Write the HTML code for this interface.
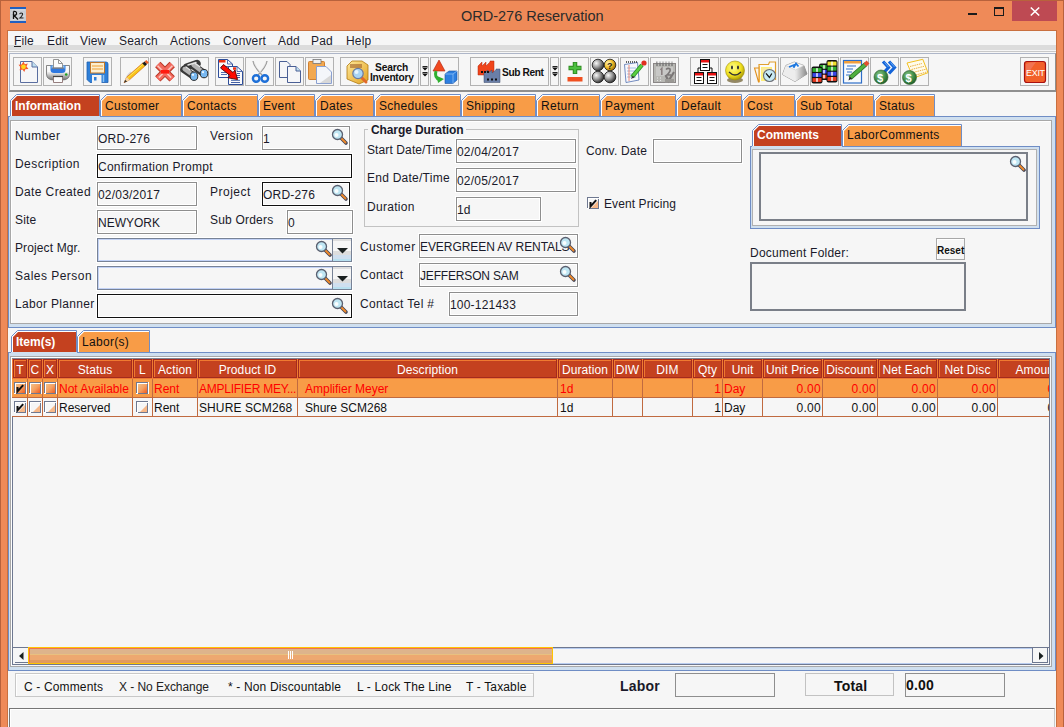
<!DOCTYPE html>
<html><head><meta charset="utf-8"><style>
*{box-sizing:border-box;margin:0;padding:0}
html,body{width:1064px;height:727px;overflow:hidden}
body{position:relative;background:#EF8A58;font-family:"Liberation Sans",sans-serif;font-size:12px;color:#1a1a2a}
.a{position:absolute}
.t{position:absolute;white-space:nowrap;line-height:14px}
svg{position:absolute;overflow:visible}
</style></head><body>
<div class="a" style="left:0px;top:0px;width:1064px;height:727px;border:1px solid #B8623C;border-bottom:none"></div>
<svg style="left:10px;top:7px" width="16" height="16"><rect x="0" y="0" width="16" height="16" fill="#C8CCD2"/><rect x="0" y="0" width="16" height="2" fill="#1F5FC0"/><rect x="0" y="14" width="16" height="2" fill="#1F5FC0"/><path d="M2 3 H15 M1 6 H14 M2 9 H15 M1 12 H14" stroke="#E0E2E6" stroke-width="0.8"/><path d="M3.5 4.5 V12 M3.5 4.5 Q7 4 6.5 7 Q6 8.5 4 8.5 L8 12.5" stroke="#111" stroke-width="1.3" fill="none"/><path d="M9.5 7 Q11 5.3 12.5 6.5 Q13 8 10 11 H13.5" stroke="#222" stroke-width="1.1" fill="none"/></svg>
<div class="t" style="left:461px;top:7px;font-size:14.5px;color:#2b2b2b;letter-spacing:0px;line-height:18px;">ORD-276 Reservation</div>
<div class="a" style="left:968px;top:13px;width:9px;height:2px;background:#1b1b1b"></div>
<div class="a" style="left:994px;top:7px;width:10px;height:9px;border:1px solid #1b1b1b;border-top-width:2px"></div>
<div class="a" style="left:1012px;top:1px;width:45px;height:20px;background:#BE4A53"></div>
<svg style="left:1030px;top:7px" width="10" height="9"><path d="M0.8 0.5 L9.2 8.5 M9.2 0.5 L0.8 8.5" stroke="#fff" stroke-width="1.6"/></svg>
<div class="a" style="left:7px;top:30px;width:1050px;height:697px;background:#C9703F"></div>
<div class="a" style="left:8px;top:31px;width:1048px;height:696px;background:#F6F6F6"></div>
<div class="a" style="left:8px;top:45px;width:1048px;height:5px;background:#DCDCDC"></div>
<div class="t" style="left:14px;top:34px;font-size:12px;color:#1c1c2c;letter-spacing:0.15px;">File</div>
<div class="t" style="left:47px;top:34px;font-size:12px;color:#1c1c2c;letter-spacing:0.15px;">Edit</div>
<div class="t" style="left:80px;top:34px;font-size:12px;color:#1c1c2c;letter-spacing:0.15px;">View</div>
<div class="t" style="left:119px;top:34px;font-size:12px;color:#1c1c2c;letter-spacing:0.15px;">Search</div>
<div class="t" style="left:170px;top:34px;font-size:12px;color:#1c1c2c;letter-spacing:0.15px;">Actions</div>
<div class="t" style="left:223px;top:34px;font-size:12px;color:#1c1c2c;letter-spacing:0.15px;">Convert</div>
<div class="t" style="left:278px;top:34px;font-size:12px;color:#1c1c2c;letter-spacing:0.15px;">Add</div>
<div class="t" style="left:311px;top:34px;font-size:12px;color:#1c1c2c;letter-spacing:0.15px;">Pad</div>
<div class="t" style="left:346px;top:34px;font-size:12px;color:#1c1c2c;letter-spacing:0.15px;">Help</div>
<div class="a" style="left:14px;top:46px;width:7px;height:1px;background:#222"></div>
<div class="a" style="left:8px;top:51px;width:1048px;height:1px;background:#C8C8C8"></div>
<div class="a" style="left:9px;top:53px;width:1047px;height:39px;border-top:1px solid #AEB6C8;border-left:1px solid #AEB6C8;border-right:1px solid #8F8F8F;border-bottom:2px solid #8F8F8F;background:#F6F6F6"></div>
<div class="a" style="left:13px;top:57px;width:29px;height:29px;border:1px solid #B2B2B2;background:#F6F6F6"></div>
<div class="a" style="left:43px;top:57px;width:29px;height:29px;border:1px solid #B2B2B2;background:#F6F6F6"></div>
<div class="a" style="left:83px;top:57px;width:29px;height:29px;border:1px solid #B2B2B2;background:#F6F6F6"></div>
<div class="a" style="left:120px;top:57px;width:29px;height:29px;border:1px solid #B2B2B2;background:#F6F6F6"></div>
<div class="a" style="left:150px;top:57px;width:29px;height:29px;border:1px solid #B2B2B2;background:#F6F6F6"></div>
<div class="a" style="left:180px;top:57px;width:29px;height:29px;border:1px solid #B2B2B2;background:#F6F6F6"></div>
<div class="a" style="left:215px;top:57px;width:29px;height:29px;border:1px solid #B2B2B2;background:#F6F6F6"></div>
<div class="a" style="left:245px;top:57px;width:29px;height:29px;border:1px solid #B2B2B2;background:#F6F6F6"></div>
<div class="a" style="left:275px;top:57px;width:29px;height:29px;border:1px solid #B2B2B2;background:#F6F6F6"></div>
<div class="a" style="left:305px;top:57px;width:29px;height:29px;border:1px solid #B2B2B2;background:#F6F6F6"></div>
<div class="a" style="left:340px;top:57px;width:79px;height:29px;border:1px solid #B2B2B2;background:#F6F6F6"></div>
<div class="a" style="left:420px;top:57px;width:9px;height:29px;border:1px solid #B2B2B2;background:#F6F6F6"></div>
<div class="a" style="left:430px;top:57px;width:29px;height:29px;border:1px solid #B2B2B2;background:#F6F6F6"></div>
<div class="a" style="left:470px;top:57px;width:79px;height:29px;border:1px solid #B2B2B2;background:#F6F6F6"></div>
<div class="a" style="left:550px;top:57px;width:9px;height:29px;border:1px solid #B2B2B2;background:#F6F6F6"></div>
<div class="a" style="left:560px;top:57px;width:29px;height:29px;border:1px solid #B2B2B2;background:#F6F6F6"></div>
<div class="a" style="left:590px;top:57px;width:29px;height:29px;border:1px solid #B2B2B2;background:#F6F6F6"></div>
<div class="a" style="left:620px;top:57px;width:29px;height:29px;border:1px solid #B2B2B2;background:#F6F6F6"></div>
<div class="a" style="left:650px;top:57px;width:29px;height:29px;border:1px solid #B2B2B2;background:#F6F6F6"></div>
<div class="a" style="left:690px;top:57px;width:29px;height:29px;border:1px solid #B2B2B2;background:#F6F6F6"></div>
<div class="a" style="left:720px;top:57px;width:29px;height:29px;border:1px solid #B2B2B2;background:#F6F6F6"></div>
<div class="a" style="left:750px;top:57px;width:29px;height:29px;border:1px solid #B2B2B2;background:#F6F6F6"></div>
<div class="a" style="left:780px;top:57px;width:29px;height:29px;border:1px solid #B2B2B2;background:#F6F6F6"></div>
<div class="a" style="left:810px;top:57px;width:29px;height:29px;border:1px solid #B2B2B2;background:#F6F6F6"></div>
<div class="a" style="left:840px;top:57px;width:29px;height:29px;border:1px solid #B2B2B2;background:#F6F6F6"></div>
<div class="a" style="left:870px;top:57px;width:29px;height:29px;border:1px solid #B2B2B2;background:#F6F6F6"></div>
<div class="a" style="left:900px;top:57px;width:29px;height:29px;border:1px solid #B2B2B2;background:#F6F6F6"></div>
<div class="a" style="left:1020px;top:57px;width:29px;height:29px;border:1px solid #B2B2B2;background:#F6F6F6"></div>
<svg style="left:0;top:0" width="1064" height="95">
<defs>
<linearGradient id="og" x1="0" y1="0" x2="1" y2="1"><stop offset="0" stop-color="#F2C890"/><stop offset="0.55" stop-color="#F5A060"/><stop offset="1" stop-color="#F05A20"/></linearGradient>
<radialGradient id="gball" cx="0.35" cy="0.35" r="0.7"><stop offset="0" stop-color="#fafafa"/><stop offset="0.5" stop-color="#9a9a9a"/><stop offset="1" stop-color="#2a2a2a"/></radialGradient>
<radialGradient id="yball" cx="0.35" cy="0.35" r="0.7"><stop offset="0" stop-color="#fff8c0"/><stop offset="0.5" stop-color="#F5C330"/><stop offset="1" stop-color="#9a6a00"/></radialGradient>
<radialGradient id="smile" cx="0.4" cy="0.35" r="0.7"><stop offset="0" stop-color="#FFFF90"/><stop offset="0.6" stop-color="#F0E020"/><stop offset="1" stop-color="#A09000"/></radialGradient>
<radialGradient id="coin" cx="0.4" cy="0.35" r="0.7"><stop offset="0" stop-color="#8FCB8F"/><stop offset="0.6" stop-color="#3E8A45"/><stop offset="1" stop-color="#1E5A25"/></radialGradient>
<linearGradient id="prn" x1="0" y1="0" x2="0" y2="1"><stop offset="0" stop-color="#fafafa"/><stop offset="0.5" stop-color="#e8e8e8"/><stop offset="1" stop-color="#707070"/></linearGradient>
<linearGradient id="key" x1="0" y1="0" x2="1" y2="0"><stop offset="0" stop-color="#f0f0f0"/><stop offset="1" stop-color="#8a8a8a"/></linearGradient>
<linearGradient id="fold" x1="0" y1="0" x2="1" y2="1"><stop offset="0" stop-color="#FFE89A"/><stop offset="1" stop-color="#E2A21F"/></linearGradient>
</defs>
<path d="M20.5 61.5 H32 L37.5 67 V82.5 H20.5 Z" fill="#f6f6f8" stroke="#5a6ea0" stroke-width="1"/>
<path d="M32 61.5 V67 H37.5" fill="#BFE0F0" stroke="#5a6ea0" stroke-width="1"/>
<path d="M23.5 61.5 L24.8 64.3 L27.8 63.6 L26.5 66.5 L28.5 69 L25.3 69.2 L24.3 72 L22.5 69.6 L19.5 70.2 L20.6 67.2 L18.5 64.8 L21.6 64.6 Z" fill="#F5582A"/>
<circle cx="23.5" cy="66.8" r="2.4" fill="#FFD41A"/>
<path d="M46.5 65.5 H69.5 V74 Q69.5 80 62 80 H54 Q46.5 80 46.5 74 Z" fill="url(#prn)" stroke="#6a6a6a" stroke-width="0.8"/>
<path d="M47.3 66 H68.7 V72 H47.3 Z" fill="#FAFAFA"/>
<path d="M50.5 65.5 H65.5 V70 Q65.5 73 62 73 H54 Q50.5 73 50.5 70 Z" fill="#2E78E0"/>
<path d="M51.5 65.5 H64.5 V68.5 H51.5 Z" fill="#8CC4F4"/>
<path d="M53.5 59.5 H58.5 L62.5 63.5 V68 H53.5 Z" fill="#FCFCFC" stroke="#8a8a8a" stroke-width="0.9"/>
<path d="M58.5 59.5 V63.5 H62.5" fill="none" stroke="#8a8a8a" stroke-width="0.9"/>
<path d="M52 68.2 H64" stroke="#707888" stroke-width="1.2"/>
<circle cx="66.2" cy="74.5" r="1.3" fill="#20A020"/>
<path d="M53.5 76.5 H62.5 V82.5 H53.5 Z" fill="#FCFCFC" stroke="#8a7070" stroke-width="0.9"/>
<path d="M53 76.5 H63" stroke="#444" stroke-width="1.2"/>
<path d="M87 62 H106 Q108 62 108 64 V82.5 H90 L87 79.5 Z" fill="#2E7FD8" stroke="#1f5fb0" stroke-width="0.8"/>
<rect x="90.5" y="62.5" width="14" height="10.5" fill="#FCEFD0" stroke="#C0782A" stroke-width="1"/>
<path d="M92 66 H103 M92 69 H103" stroke="#F0A030" stroke-width="1.2"/>
<rect x="92" y="75" width="9.5" height="8" fill="#f4f4f4"/><rect x="94" y="77" width="2.5" height="3.5" fill="#2E7FD8"/>
<path d="M103.5 75 V82" stroke="#8EC3F2" stroke-width="1.5"/>
<path d="M124.5 82 Q125 76 130.5 71.5 L132 73 Z" fill="#d0d0d0" opacity="0.9"/>
<path d="M124 82.8 L126.8 77 L143 62.8 L145.6 65.4 L129.5 79.8 Z" fill="#F8C418" stroke="#D06010" stroke-width="0.6"/>
<path d="M127.8 77.6 L143.8 63.6" stroke="#FFE870" stroke-width="0.8"/>
<path d="M124 82.8 L125.2 79.8 L127.2 81.6 Z" fill="#333"/>
<path d="M125.2 79.8 L126.8 77 L129.5 79.8 L127.2 81.6 Z" fill="#F4D4A8"/>
<path d="M142.3 63.4 L144.6 61.4 L147.2 64 L145 66 Z" fill="#1a1a1a"/>
<path d="M144.6 61.4 L146.3 60 L148.8 62.5 L147.2 64 Z" fill="#F06028"/>
<path d="M157.8 64.5 L172.2 78.9 M172.2 64.5 L157.8 78.9" stroke="#B83828" stroke-width="7.6" stroke-linecap="butt"/>
<path d="M157.8 64.5 L172.2 78.9 M172.2 64.5 L157.8 78.9" stroke="#F36A5E" stroke-width="5.6" stroke-linecap="butt"/>
<path d="M157.6 65.8 L162.6 70.8 M172.4 65.8 L167.4 70.8 M158.8 77.6 L162.6 73.8 M171.2 77.6 L167.4 73.8" stroke="#FBC8C0" stroke-width="1.5" stroke-linecap="butt"/>
<path d="M161 71.7 H169" stroke="#FF1A10" stroke-width="3.6"/>
<path d="M184 69.5 L193.5 76 M193 65.5 L204 73.5 M187 67 L197 63.5" stroke="#3a3a3a" stroke-width="7.5" stroke-linecap="round"/>
<path d="M184.5 69 L192.5 74.8 M193.5 65 L202.5 71.8" stroke="#B4B4B4" stroke-width="4.2" stroke-linecap="round"/>
<path d="M186 67 L190 70 M188 65 L196 62.5 M195.5 63.6 L199.5 66.5" stroke="#E6E6E6" stroke-width="1.4" stroke-linecap="round"/>
<ellipse cx="194" cy="76.2" rx="3.8" ry="4.2" fill="#78B8F0" stroke="#2a2a2a" stroke-width="1"/>
<ellipse cx="204" cy="73.6" rx="3.8" ry="4.2" fill="#78B8F0" stroke="#2a2a2a" stroke-width="1"/>
<circle cx="193" cy="74.8" r="1.1" fill="#F0F8FF"/><circle cx="203" cy="72.2" r="1.1" fill="#F0F8FF"/>
<path d="M218.5 59.5 H227.5 L232.5 64 V77.5 H218.5 Z" fill="#FAFAFC" stroke="#2E4E9A" stroke-width="1"/>
<path d="M227.5 59.5 V64 H232.5" fill="none" stroke="#2E4E9A" stroke-width="0.8"/>
<rect x="219" y="60" width="6.5" height="2.5" fill="#F03010"/>
<path d="M221 66.5 H229 M221 72.5 H227 M221 74.5 H227" stroke="#4060A8" stroke-width="0.9"/>
<path d="M228.5 66.5 H237 L242.5 71.5 V84.5 H228.5 Z" fill="#FAFAFC" stroke="#2E4E9A" stroke-width="1"/>
<path d="M237 66.5 V71.5 H242.5" fill="none" stroke="#2E4E9A" stroke-width="0.8"/>
<rect x="233" y="67.3" width="3" height="2.5" fill="#F03010"/>
<path d="M237 73.5 H240 M237 75.5 H240 M237 77.5 H240 M231 80.3 H240 M231 82.5 H240" stroke="#2E4E9A" stroke-width="0.9"/>
<path d="M220.5 68 L223.5 64.5 L233 72.5 L235 70 L237.5 79.5 L228 77.8 L230 75.5 Z" fill="#FF0A00" stroke="#500" stroke-width="0.9" stroke-linejoin="round"/>
<path d="M253 61 Q254 67 262 75 M267 61 Q266 67 258 75" stroke="#9a9a9a" stroke-width="1.3" fill="none"/>
<path d="M254 62 Q255.5 67 261 73 M266 62 Q264.5 67 259 73" stroke="#e0e0e0" stroke-width="0.6" fill="none"/>
<circle cx="256.2" cy="78.5" r="3.3" fill="none" stroke="#1E70D8" stroke-width="2.4"/>
<circle cx="264.8" cy="78.5" r="3.3" fill="none" stroke="#1E70D8" stroke-width="2.4"/>
<path d="M279.5 61.5 H287 L290 64.5 V77.5 H279.5 Z" fill="#f6f6f8" stroke="#4a5f95" stroke-width="1"/>
<path d="M287.5 66.5 H296 L300.5 71 V82.5 H287.5 Z" fill="#f6f6f8" stroke="#4a5f95" stroke-width="1"/>
<path d="M296 66.5 V71 H300.5" fill="#BFE0F0" stroke="#4a5f95" stroke-width="1"/>
<rect x="308.5" y="61.5" width="16" height="18" rx="1" fill="#F2A850" stroke="#D08030" stroke-width="1"/>
<rect x="313" y="59.5" width="8" height="4" fill="#f0f0f0" stroke="#777" stroke-width="0.8"/>
<path d="M316.5 66.5 H326 L331.5 72 V83.5 H316.5 Z" fill="#f4f6fa" stroke="#8aa0d0" stroke-width="1"/>
<path d="M320 83 L331 75 V83 Z" fill="#d8d8d8"/>
<path d="M347 66 L352 61 H362 L368 65 V80 L359 84 L347 79 Z" fill="url(#fold)" stroke="#B07A10" stroke-width="0.8"/>
<path d="M350 64 H362 V68 H350 Z" fill="#A0602A" opacity="0.6"/>
<path d="M361 77 L366 82" stroke="#E06A2A" stroke-width="3" stroke-linecap="round"/>
<circle cx="358" cy="73.5" r="5.2" fill="#A8D4F4" stroke="#6a7aa0" stroke-width="1.2"/>
<circle cx="356.5" cy="72" r="2" fill="#E6F4FF"/>
<text x="375" y="71" font-family="Liberation Sans" font-weight="bold" font-size="10.2" fill="#111" letter-spacing="-0.15">Search</text>
<text x="370" y="80.5" font-family="Liberation Sans" font-weight="bold" font-size="10.2" fill="#111" letter-spacing="-0.25">Inventory</text>
<path d="M422.5 66.5 H427.5 M422.5 72.5 H427.5" stroke="#222" stroke-width="1"/>
<path d="M422 67.5 H428 L425 70.5 Z M422 73.5 H428 L425 76.5 Z" fill="#111"/>
<path d="M552.5 66.5 H557.5 M552.5 72.5 H557.5" stroke="#222" stroke-width="1"/>
<path d="M552 67.5 H558 L555 70.5 Z M552 73.5 H558 L555 76.5 Z" fill="#111"/>
<path d="M439 60 L445 71 H433 Z" fill="#F04A20" stroke="#B02010" stroke-width="0.6"/>
<path d="M436 71 Q434 78 440 80" stroke="#30B030" stroke-width="3" fill="none"/>
<path d="M438 83 L444 79 L437 76 Z" fill="#30B030"/>
<path d="M445 74 L449 71 H457 V80 L453 83.5 H445 Z" fill="#2E7FE0" stroke="#1a4fa0" stroke-width="0.6"/>
<path d="M445 74 H453 V83.5 M453 74 L457 71" stroke="#8ec0f8" stroke-width="0.8" fill="none"/>
<path d="M478 66 L482 62 V66 L486 62 V66 L490 62 V61 H494 V75 H478 Z" fill="#F0441A" stroke="#B02A10" stroke-width="0.5"/>
<path d="M484 73 L488 70 V73 L492 70 V73 L496 70 V69 H500 V82.5 H484 Z" fill="#6A7FA8" stroke="#3a4a6a" stroke-width="0.5"/>
<rect x="481" y="71" width="2" height="2" fill="#111"/>
<rect x="484" y="71" width="2" height="2" fill="#111"/>
<rect x="487" y="71" width="2" height="2" fill="#111"/>
<rect x="487" y="78.5" width="2" height="2" fill="#111"/>
<rect x="491" y="78.5" width="2" height="2" fill="#111"/>
<rect x="495" y="78.5" width="2" height="2" fill="#111"/>
<text x="502" y="75.5" font-family="Liberation Sans" font-weight="bold" font-size="10.2" fill="#111" letter-spacing="-0.4">Sub Rent</text>
<path d="M575 62 V74 M568.5 68 H581.5" stroke="#2E8A20" stroke-width="4.5"/>
<path d="M575 62.8 V73.2 M569.3 68 H580.7" stroke="#4CC040" stroke-width="2.5"/>
<rect x="567.5" y="77" width="15" height="4.5" fill="#F05020"/>
<circle cx="598" cy="65" r="5.8" fill="url(#gball)" stroke="#111" stroke-width="0.8"/>
<circle cx="610" cy="65" r="5.8" fill="url(#yball)" stroke="#111" stroke-width="0.8"/>
<circle cx="598" cy="77" r="5.8" fill="url(#gball)" stroke="#111" stroke-width="0.8"/>
<circle cx="610" cy="77" r="5.8" fill="url(#gball)" stroke="#111" stroke-width="0.8"/>
<text x="607" y="69" font-family="Liberation Sans" font-weight="bold" font-size="9" fill="#222">?</text>
<path d="M624.5 64.5 L637.5 62.5 L639 80 L626 82.5 Z" fill="#f8f8fc" stroke="#5070b0" stroke-width="0.8"/>
<path d="M626 62 H637" stroke="#333" stroke-width="1.5" stroke-dasharray="1 1"/>
<path d="M627 68 H636 M627 71 H636 M627 74 H636 M627 77 H636" stroke="#8ab0e0" stroke-width="0.8"/>
<path d="M629 65 V81" stroke="#F07050" stroke-width="0.8"/>
<path d="M632 77 L642 65" stroke="#2a8a2a" stroke-width="4.2"/><path d="M632 77 L642 65" stroke="#5AD040" stroke-width="2.6"/>
<circle cx="644" cy="63" r="2.6" fill="#E03020"/>
<path d="M631 79 L632.5 75.5 L634.5 77.3 Z" fill="#333"/>
<rect x="653.5" y="63.5" width="22" height="19" fill="#B8B8B4" stroke="#8a8686" stroke-width="1"/>
<rect x="656" y="67" width="17" height="9" fill="#C8C8C6"/>
<path d="M657 61.5 V66 M660 61.5 V66 M663 61.5 V66 M666 61.5 V66 M669 61.5 V66 M672 61.5 V66" stroke="#777" stroke-width="1.4"/>
<path d="M657 62 H673" stroke="#eee" stroke-width="1"/>
<path d="M660.5 70 L661.8 68.5 V75" stroke="#8a8080" stroke-width="1.6" fill="none"/>
<path d="M666 69.5 Q668 67.5 670 69 Q671 71 667 75 H671" stroke="#7a7676" stroke-width="1.6" fill="none"/>
<path d="M665.5 75 L668.5 81 L674 72" stroke="#7a7676" stroke-width="2.2" fill="none"/>
<rect x="665" y="79" width="9" height="3.5" fill="#9a9894"/>
<path d="M657 78 H658 M660 78 H661 M657 80.5 H658 M660 80.5 H661" stroke="#e8e8e8" stroke-width="1"/>
<path d="M698 72 V68 H712 V72" stroke="#111" stroke-width="1" fill="none"/>
<rect x="700.5" y="59.5" width="9" height="11" fill="#fff" stroke="#111" stroke-width="1"/>
<rect x="701" y="60" width="8" height="2.5" fill="#E81010"/>
<path d="M702.5 64.5 H707.5 M702.5 67.5 H707.5" stroke="#111" stroke-width="1"/>
<rect x="694.5" y="72.5" width="9" height="11" fill="#fff" stroke="#111" stroke-width="1"/>
<rect x="695" y="73" width="8" height="2.5" fill="#E81010"/>
<path d="M696.5 77.5 H701.5 M696.5 80.5 H701.5" stroke="#111" stroke-width="1"/>
<rect x="707.5" y="72.5" width="9" height="11" fill="#fff" stroke="#111" stroke-width="1"/>
<rect x="708" y="73" width="8" height="2.5" fill="#E81010"/>
<path d="M709.5 77.5 H714.5 M709.5 80.5 H714.5" stroke="#111" stroke-width="1"/>
<ellipse cx="735" cy="80" rx="8" ry="3" fill="#6a5a2a" opacity="0.7"/>
<circle cx="735" cy="70.5" r="9.5" fill="url(#smile)" stroke="#A09010" stroke-width="0.6"/>
<ellipse cx="732" cy="67.5" rx="1" ry="2" fill="#333"/><ellipse cx="738" cy="67.5" rx="1" ry="2" fill="#333"/>
<path d="M729 72 Q735 78 741 72" stroke="#333" stroke-width="1.3" fill="none"/>
<path d="M759 81.5 V64.5 H768.5 L769.5 62 H775.5 V80" fill="#FBFBFB" stroke="#E0A030" stroke-width="1.2"/>
<path d="M761 67 H772 V81 H761 Z" fill="#FFF07A"/>
<path d="M762 68 H771 V72 H762 Z" fill="#F8E8A0"/>
<path d="M754.5 68 H759 V82 H758.5 Z" fill="#FBF6E8" stroke="#E09020" stroke-width="1.1"/>
<path d="M759.5 82 V66" stroke="#F0B040" stroke-width="1"/>
<circle cx="769.5" cy="75.5" r="6" fill="#C8EAF4" stroke="#6a6e76" stroke-width="1.1"/>
<path d="M766 73.3 L769.4 77.5 L771.8 73.5" stroke="#111" stroke-width="1.2" fill="none"/>
<path d="M785.8 65.5 L782.5 74.5 L795 81.5 L807 74 L803.8 65.5 L794.2 62.1 Z" fill="#d8d8d8" stroke="#9a9a9a" stroke-width="1"/>
<path d="M795.4 70 L795 81.5 L807 74 L803.8 65.5 Z" fill="url(#key)"/>
<path d="M785.8 65.5 L782.5 74.5 L795 81.5 L795.4 70 Z" fill="#EDEDED"/>
<path d="M785.8 65.5 L794.2 62.1 L803.8 65.5 L795.4 70 Z" fill="#F8F8F8" stroke="#c8c8c8" stroke-width="0.5"/>
<path d="M789 67 L797 63.8 M793.5 67.8 L796 63.5 L798.5 66.5" stroke="#1E78E0" stroke-width="1.8" fill="none"/>
<rect x="819" y="63.5" width="10" height="16.5" rx="2" fill="#111"/>
<rect x="820" y="65.1" width="8" height="3.6" fill="#30B030"/>
<rect x="823.2" y="65.1" width="1.6" height="3.6" fill="#fff" opacity="0.85"/>
<rect x="820" y="69.9" width="8" height="3.6" fill="#3A48E8"/>
<rect x="823.2" y="69.9" width="1.6" height="3.6" fill="#fff" opacity="0.85"/>
<rect x="820" y="74.8" width="8" height="3.6" fill="#E83A20"/>
<rect x="823.2" y="74.8" width="1.6" height="3.6" fill="#fff" opacity="0.85"/>
<rect x="811.5" y="66.5" width="11" height="17.0" rx="2" fill="#111"/>
<rect x="812.5" y="68.1" width="9" height="3.8" fill="#30B030"/>
<rect x="816.2" y="68.1" width="1.6" height="3.8" fill="#fff" opacity="0.85"/>
<rect x="812.5" y="73.1" width="9" height="3.8" fill="#3A48E8"/>
<rect x="816.2" y="73.1" width="1.6" height="3.8" fill="#fff" opacity="0.85"/>
<rect x="812.5" y="78.1" width="9" height="3.8" fill="#E83A20"/>
<rect x="816.2" y="78.1" width="1.6" height="3.8" fill="#fff" opacity="0.85"/>
<rect x="826.5" y="60" width="11" height="22.5" rx="2" fill="#111"/>
<rect x="827.5" y="61.6" width="9" height="3.9" fill="#F0E030"/>
<rect x="831.2" y="61.6" width="1.6" height="3.9" fill="#fff" opacity="0.85"/>
<rect x="827.5" y="66.7" width="9" height="3.9" fill="#30B030"/>
<rect x="831.2" y="66.7" width="1.6" height="3.9" fill="#fff" opacity="0.85"/>
<rect x="827.5" y="71.8" width="9" height="3.9" fill="#3A48E8"/>
<rect x="831.2" y="71.8" width="1.6" height="3.9" fill="#fff" opacity="0.85"/>
<rect x="827.5" y="77.0" width="9" height="3.9" fill="#E83A20"/>
<rect x="831.2" y="77.0" width="1.6" height="3.9" fill="#fff" opacity="0.85"/>
<rect x="843.5" y="60.5" width="18" height="22.5" fill="#f8fafc" stroke="#2E6EC8" stroke-width="1.2"/>
<rect x="844" y="61" width="17" height="2.5" fill="#F0A040"/>
<path d="M847 66 H856 M846 69 H853 M847 72 H852 M846 75 H850" stroke="#2E6EC8" stroke-width="1"/>
<path d="M850 78 L866 64" stroke="#2a6a2a" stroke-width="4.6"/><path d="M850 78 L866 64" stroke="#50B040" stroke-width="3"/>
<path d="M865 65 L868 62" stroke="#E05030" stroke-width="4"/>
<path d="M848.5 80.5 L849.5 76.5 L852 78.5 Z" fill="#222"/>
<path d="M883 61.5 L888.5 67.5 L883 73.5 M889 61.5 L894.5 67.5 L889 73.5" stroke="#1464D8" stroke-width="3.2" fill="none"/>
<path d="M884.5 62.5 L888.5 67 M890.5 62.5 L894.5 67" stroke="#60A8F8" stroke-width="1" fill="none"/>
<circle cx="881" cy="77" r="7" fill="url(#coin)" stroke="#2a5a2a" stroke-width="0.6"/>
<text x="877" y="81.5" font-family="Liberation Sans" font-weight="bold" font-size="11" fill="#fff">$</text>
<path d="M907 63 L922.8 59.3 L928 72.7 L915 77.5 L910 70 Z" fill="#FFFCEC" stroke="#F2C020" stroke-width="1"/>
<path d="M910 66.5 L922 63.5 M911.5 69.5 L924 66.3 M913 72.5 L925.5 69.3 M916 75 L926.5 72" stroke="#E8A830" stroke-width="0.9" stroke-dasharray="1.5 0.8"/>
<circle cx="909.5" cy="77.5" r="7" fill="url(#coin)" stroke="#2a5a2a" stroke-width="0.6"/>
<text x="905.5" y="82" font-family="Liberation Sans" font-weight="bold" font-size="11" fill="#fff">$</text>
<rect x="1024.5" y="61.5" width="21" height="21" rx="2.5" fill="#F2602A" stroke="#A81010" stroke-width="1.2"/>
<path d="M1026 64 Q1030 62 1036 62 L1026 76 Z" fill="#F08070" opacity="0.6"/>
<text x="1026" y="76" font-family="Liberation Sans" font-size="9" fill="#fff" letter-spacing="-0.3">EXIT</text>
</svg>
<svg style="left:10px;top:94px" width="91" height="22"><path d="M0.5 22 L0.5 6.5 L6.5 0.5 L89.5 0.5 L89.5 22" fill="#fff" stroke="#6F8DC5" stroke-width="1"/><path d="M2 22 L2 7 L7 2 L89 2 L89 22 Z" fill="#C4411F"/></svg>
<div class="t" style="left:15px;top:99px;font-size:12px;color:#fff;letter-spacing:0px;font-weight:bold;">Information</div>
<svg style="left:100px;top:94px" width="83" height="22"><path d="M0.5 22 L0.5 6.5 L6.5 0.5 L81.5 0.5 L81.5 22" fill="#fff" stroke="#6F8DC5" stroke-width="1"/><path d="M2 22 L2 7 L7 2 L81 2 L81 22 Z" fill="#F89C47"/></svg>
<div class="t" style="left:105px;top:99px;font-size:12px;color:#111;letter-spacing:0.3px;">Customer</div>
<svg style="left:182px;top:94px" width="77" height="22"><path d="M0.5 22 L0.5 6.5 L6.5 0.5 L75.5 0.5 L75.5 22" fill="#fff" stroke="#6F8DC5" stroke-width="1"/><path d="M2 22 L2 7 L7 2 L75 2 L75 22 Z" fill="#F89C47"/></svg>
<div class="t" style="left:187px;top:99px;font-size:12px;color:#111;letter-spacing:0.3px;">Contacts</div>
<svg style="left:258px;top:94px" width="58" height="22"><path d="M0.5 22 L0.5 6.5 L6.5 0.5 L56.5 0.5 L56.5 22" fill="#fff" stroke="#6F8DC5" stroke-width="1"/><path d="M2 22 L2 7 L7 2 L56 2 L56 22 Z" fill="#F89C47"/></svg>
<div class="t" style="left:263px;top:99px;font-size:12px;color:#111;letter-spacing:0.3px;">Event</div>
<svg style="left:315px;top:94px" width="60" height="22"><path d="M0.5 22 L0.5 6.5 L6.5 0.5 L58.5 0.5 L58.5 22" fill="#fff" stroke="#6F8DC5" stroke-width="1"/><path d="M2 22 L2 7 L7 2 L58 2 L58 22 Z" fill="#F89C47"/></svg>
<div class="t" style="left:320px;top:99px;font-size:12px;color:#111;letter-spacing:0.3px;">Dates</div>
<svg style="left:374px;top:94px" width="88" height="22"><path d="M0.5 22 L0.5 6.5 L6.5 0.5 L86.5 0.5 L86.5 22" fill="#fff" stroke="#6F8DC5" stroke-width="1"/><path d="M2 22 L2 7 L7 2 L86 2 L86 22 Z" fill="#F89C47"/></svg>
<div class="t" style="left:379px;top:99px;font-size:12px;color:#111;letter-spacing:0.3px;">Schedules</div>
<svg style="left:461px;top:94px" width="76" height="22"><path d="M0.5 22 L0.5 6.5 L6.5 0.5 L74.5 0.5 L74.5 22" fill="#fff" stroke="#6F8DC5" stroke-width="1"/><path d="M2 22 L2 7 L7 2 L74 2 L74 22 Z" fill="#F89C47"/></svg>
<div class="t" style="left:466px;top:99px;font-size:12px;color:#111;letter-spacing:0.3px;">Shipping</div>
<svg style="left:536px;top:94px" width="65" height="22"><path d="M0.5 22 L0.5 6.5 L6.5 0.5 L63.5 0.5 L63.5 22" fill="#fff" stroke="#6F8DC5" stroke-width="1"/><path d="M2 22 L2 7 L7 2 L63 2 L63 22 Z" fill="#F89C47"/></svg>
<div class="t" style="left:541px;top:99px;font-size:12px;color:#111;letter-spacing:0.3px;">Return</div>
<svg style="left:600px;top:94px" width="77" height="22"><path d="M0.5 22 L0.5 6.5 L6.5 0.5 L75.5 0.5 L75.5 22" fill="#fff" stroke="#6F8DC5" stroke-width="1"/><path d="M2 22 L2 7 L7 2 L75 2 L75 22 Z" fill="#F89C47"/></svg>
<div class="t" style="left:605px;top:99px;font-size:12px;color:#111;letter-spacing:0.3px;">Payment</div>
<svg style="left:676px;top:94px" width="67" height="22"><path d="M0.5 22 L0.5 6.5 L6.5 0.5 L65.5 0.5 L65.5 22" fill="#fff" stroke="#6F8DC5" stroke-width="1"/><path d="M2 22 L2 7 L7 2 L65 2 L65 22 Z" fill="#F89C47"/></svg>
<div class="t" style="left:681px;top:99px;font-size:12px;color:#111;letter-spacing:0.3px;">Default</div>
<svg style="left:742px;top:94px" width="54" height="22"><path d="M0.5 22 L0.5 6.5 L6.5 0.5 L52.5 0.5 L52.5 22" fill="#fff" stroke="#6F8DC5" stroke-width="1"/><path d="M2 22 L2 7 L7 2 L52 2 L52 22 Z" fill="#F89C47"/></svg>
<div class="t" style="left:747px;top:99px;font-size:12px;color:#111;letter-spacing:0.3px;">Cost</div>
<svg style="left:795px;top:94px" width="80" height="22"><path d="M0.5 22 L0.5 6.5 L6.5 0.5 L78.5 0.5 L78.5 22" fill="#fff" stroke="#6F8DC5" stroke-width="1"/><path d="M2 22 L2 7 L7 2 L78 2 L78 22 Z" fill="#F89C47"/></svg>
<div class="t" style="left:800px;top:99px;font-size:12px;color:#111;letter-spacing:0.3px;">Sub Total</div>
<svg style="left:874px;top:94px" width="62" height="22"><path d="M0.5 22 L0.5 6.5 L6.5 0.5 L60.5 0.5 L60.5 22" fill="#fff" stroke="#6F8DC5" stroke-width="1"/><path d="M2 22 L2 7 L7 2 L60 2 L60 22 Z" fill="#F89C47"/></svg>
<div class="t" style="left:879px;top:99px;font-size:12px;color:#111;letter-spacing:0.3px;">Status</div>
<div class="a" style="left:8px;top:116px;width:1048px;height:212px;border:1px solid #6F8DC5;border-top:none;background:#CFDFEF"></div>
<div class="a" style="left:10px;top:120px;width:1042px;height:204px;border:1px solid #A8A8A8;background:#F6F6F6;box-shadow:inset 1px 1px 0 #fff"></div>
<div class="a" style="left:8px;top:116px;width:2px;height:1px;background:#6F8DC5"></div>
<div class="a" style="left:100px;top:116px;width:956px;height:1px;background:#6F8DC5"></div>
<div class="t" style="left:15px;top:129px;font-size:12px;color:#1a1a2a;letter-spacing:0.45px;">Number</div>
<div class="t" style="left:15px;top:157px;font-size:12px;color:#1a1a2a;letter-spacing:0.45px;">Description</div>
<div class="t" style="left:15px;top:185px;font-size:12px;color:#1a1a2a;letter-spacing:0.38px;">Date Created</div>
<div class="t" style="left:15px;top:213px;font-size:12px;color:#1a1a2a;letter-spacing:0.2px;">Site</div>
<div class="t" style="left:15px;top:241px;font-size:12px;color:#1a1a2a;letter-spacing:0.12px;">Project Mgr.</div>
<div class="t" style="left:15px;top:269px;font-size:12px;color:#1a1a2a;letter-spacing:0.48px;">Sales Person</div>
<div class="t" style="left:15px;top:297px;font-size:12px;color:#1a1a2a;letter-spacing:0.32px;">Labor Planner</div>
<div class="a" style="left:97px;top:126px;width:100px;height:24px;border:1px solid #8E8E8E;background:#F6F6F6;box-shadow:0 0 0 1px #fff,inset 0 0 0 1px #fff"></div>
<div class="t" style="left:98px;top:132px;font-size:12px;color:#1a1a2a;letter-spacing:0.2px;">ORD-276</div>
<div class="a" style="left:97px;top:154px;width:255px;height:24px;border:1px solid #111;background:#F6F6F6;box-shadow:0 0 0 1px #fff,inset 0 0 0 1px #fff"></div>
<div class="t" style="left:98px;top:160px;font-size:12px;color:#1a1a2a;letter-spacing:0.25px;">Confirmation Prompt</div>
<div class="a" style="left:97px;top:182px;width:100px;height:24px;border:1px solid #8E8E8E;background:#F6F6F6;box-shadow:0 0 0 1px #fff,inset 0 0 0 1px #fff"></div>
<div class="t" style="left:98px;top:188px;font-size:12px;color:#1a1a2a;letter-spacing:0.2px;">02/03/2017</div>
<div class="a" style="left:97px;top:210px;width:100px;height:24px;border:1px solid #8E8E8E;background:#F6F6F6;box-shadow:0 0 0 1px #fff,inset 0 0 0 1px #fff"></div>
<div class="t" style="left:98px;top:216px;font-size:12px;color:#1a1a2a;letter-spacing:0px;">NEWYORK</div>
<div class="t" style="left:210px;top:129px;font-size:12px;color:#1a1a2a;letter-spacing:0.5px;">Version</div>
<div class="a" style="left:262px;top:126px;width:88px;height:24px;border:1px solid #8E8E8E;background:#F6F6F6;box-shadow:0 0 0 1px #fff,inset 0 0 0 1px #fff"></div>
<div class="t" style="left:263px;top:132px;font-size:12px;color:#1a1a2a;letter-spacing:0.2px;">1</div>
<svg class="a" style="left:331px;top:128px" width="17" height="17" viewBox="0 0 17 17">
<path d="M9.5 9.5 L15 15" stroke="#4a4a5a" stroke-width="3.6" stroke-linecap="round"/>
<path d="M10 10 L14.5 14.5" stroke="#F08A2A" stroke-width="1.8" stroke-linecap="round"/>
<circle cx="6.5" cy="6.5" r="5" fill="#BFE6F3" stroke="#5a6070" stroke-width="1.3"/>
<circle cx="5.5" cy="7" r="2" fill="#fff" opacity="0.9"/>
</svg>
<div class="t" style="left:210px;top:185px;font-size:12px;color:#1a1a2a;letter-spacing:0.5px;">Project</div>
<div class="a" style="left:262px;top:182px;width:88px;height:24px;border:1px solid #111;background:#F6F6F6;box-shadow:0 0 0 1px #fff,inset 0 0 0 1px #fff"></div>
<div class="t" style="left:263px;top:188px;font-size:12px;color:#1a1a2a;letter-spacing:0.2px;">ORD-276</div>
<svg class="a" style="left:331px;top:184px" width="17" height="17" viewBox="0 0 17 17">
<path d="M9.5 9.5 L15 15" stroke="#4a4a5a" stroke-width="3.6" stroke-linecap="round"/>
<path d="M10 10 L14.5 14.5" stroke="#F08A2A" stroke-width="1.8" stroke-linecap="round"/>
<circle cx="6.5" cy="6.5" r="5" fill="#BFE6F3" stroke="#5a6070" stroke-width="1.3"/>
<circle cx="5.5" cy="7" r="2" fill="#fff" opacity="0.9"/>
</svg>
<div class="t" style="left:210px;top:213px;font-size:12px;color:#1a1a2a;letter-spacing:0.2px;">Sub Orders</div>
<div class="a" style="left:287px;top:210px;width:66px;height:24px;border:1px solid #8E8E8E;background:#F6F6F6;box-shadow:0 0 0 1px #fff,inset 0 0 0 1px #fff"></div>
<div class="t" style="left:288px;top:216px;font-size:12px;color:#1a1a2a;letter-spacing:0.2px;">0</div>
<div class="a" style="left:97px;top:238px;width:255px;height:24px;border:1px solid #778296;background:#F6F6F6;box-shadow:0 0 0 1px #fff,inset 0 0 0 1px #C2D2F6"></div>
<svg class="a" style="left:315px;top:240px" width="17" height="17" viewBox="0 0 17 17">
<path d="M9.5 9.5 L15 15" stroke="#4a4a5a" stroke-width="3.6" stroke-linecap="round"/>
<path d="M10 10 L14.5 14.5" stroke="#F08A2A" stroke-width="1.8" stroke-linecap="round"/>
<circle cx="6.5" cy="6.5" r="5" fill="#BFE6F3" stroke="#5a6070" stroke-width="1.3"/>
<circle cx="5.5" cy="7" r="2" fill="#fff" opacity="0.9"/>
</svg>
<div class="a" style="left:332px;top:238px;width:20px;height:24px;border:1px solid #778296;background:linear-gradient(#DEDEDE 0,#DEDEDE 2px,#F6F6F6 2px,#F6F6F6 12px,#DDDDDD 12px,#DDDDDD 16px,#CFDFEF 16px,#CFDFEF 20px,#B8E0F0 20px)"></div>
<svg style="left:336.5px;top:248px" width="11" height="6"><path d="M0 0 L11 0 L5.5 5.5 Z" fill="#1a2020"/></svg>
<div class="a" style="left:97px;top:266px;width:255px;height:24px;border:1px solid #778296;background:#F6F6F6;box-shadow:0 0 0 1px #fff,inset 0 0 0 1px #C2D2F6"></div>
<svg class="a" style="left:315px;top:268px" width="17" height="17" viewBox="0 0 17 17">
<path d="M9.5 9.5 L15 15" stroke="#4a4a5a" stroke-width="3.6" stroke-linecap="round"/>
<path d="M10 10 L14.5 14.5" stroke="#F08A2A" stroke-width="1.8" stroke-linecap="round"/>
<circle cx="6.5" cy="6.5" r="5" fill="#BFE6F3" stroke="#5a6070" stroke-width="1.3"/>
<circle cx="5.5" cy="7" r="2" fill="#fff" opacity="0.9"/>
</svg>
<div class="a" style="left:332px;top:266px;width:20px;height:24px;border:1px solid #778296;background:linear-gradient(#DEDEDE 0,#DEDEDE 2px,#F6F6F6 2px,#F6F6F6 12px,#DDDDDD 12px,#DDDDDD 16px,#CFDFEF 16px,#CFDFEF 20px,#B8E0F0 20px)"></div>
<svg style="left:336.5px;top:276px" width="11" height="6"><path d="M0 0 L11 0 L5.5 5.5 Z" fill="#1a2020"/></svg>
<div class="a" style="left:97px;top:294px;width:255px;height:24px;border:1px solid #111;background:#F6F6F6;box-shadow:0 0 0 1px #fff,inset 0 0 0 1px #fff"></div>
<svg class="a" style="left:331px;top:297px" width="17" height="17" viewBox="0 0 17 17">
<path d="M9.5 9.5 L15 15" stroke="#4a4a5a" stroke-width="3.6" stroke-linecap="round"/>
<path d="M10 10 L14.5 14.5" stroke="#F08A2A" stroke-width="1.8" stroke-linecap="round"/>
<circle cx="6.5" cy="6.5" r="5" fill="#BFE6F3" stroke="#5a6070" stroke-width="1.3"/>
<circle cx="5.5" cy="7" r="2" fill="#fff" opacity="0.9"/>
</svg>
<div class="a" style="left:364px;top:129px;width:215px;height:98px;border:1px solid #C2C2C2"></div>
<div class="a" style="left:368px;top:123px;width:98px;height:14px;background:#F6F6F6"></div>
<div class="t" style="left:371px;top:123px;font-size:12px;color:#1a1a2a;letter-spacing:-0.1px;font-weight:bold;">Charge Duration</div>
<div class="t" style="left:367px;top:143px;font-size:12px;color:#1a1a2a;letter-spacing:0.11px;">Start Date/Time</div>
<div class="t" style="left:367px;top:171px;font-size:12px;color:#1a1a2a;letter-spacing:0.25px;">End Date/Time</div>
<div class="t" style="left:367px;top:200px;font-size:12px;color:#1a1a2a;letter-spacing:0.28px;">Duration</div>
<div class="a" style="left:456px;top:139px;width:120px;height:24px;border:1px solid #8E8E8E;background:#F6F6F6;box-shadow:0 0 0 1px #fff,inset 0 0 0 1px #fff"></div>
<div class="t" style="left:457px;top:145px;font-size:12px;color:#1a1a2a;letter-spacing:0.2px;">02/04/2017</div>
<div class="a" style="left:456px;top:168px;width:120px;height:24px;border:1px solid #8E8E8E;background:#F6F6F6;box-shadow:0 0 0 1px #fff,inset 0 0 0 1px #fff"></div>
<div class="t" style="left:457px;top:174px;font-size:12px;color:#1a1a2a;letter-spacing:0.2px;">02/05/2017</div>
<div class="a" style="left:456px;top:197px;width:85px;height:24px;border:1px solid #8E8E8E;background:#F6F6F6;box-shadow:0 0 0 1px #fff,inset 0 0 0 1px #fff"></div>
<div class="t" style="left:457px;top:203px;font-size:12px;color:#1a1a2a;letter-spacing:0.2px;">1d</div>
<div class="t" style="left:586px;top:144px;font-size:12px;color:#1a1a2a;letter-spacing:0.2px;">Conv. Date</div>
<div class="a" style="left:653px;top:139px;width:89px;height:24px;border:1px solid #8E8E8E;background:#F6F6F6;box-shadow:0 0 0 1px #fff,inset 0 0 0 1px #fff"></div>
<svg style="left:586px;top:196px" width="15" height="15"><path d="M5 12 L12 5 V12 Z" fill="#F7B888"/><path d="M1 12.5 H14 M13.5 13 V1" stroke="#fff" stroke-width="1"/><path d="M1 1.5 H13 M1.5 1 V12 M12.5 3 V13 M3 12.5 H13" stroke="#6E7890" stroke-width="1"/><path d="M2 2.5 H12 M2.5 2 V12" stroke="#fff" stroke-width="1"/><path d="M4.5 6 V10.5 L10.2 4.2" stroke="#111" stroke-width="2" fill="none" stroke-linejoin="miter"/></svg>
<div class="t" style="left:604px;top:197px;font-size:12px;color:#1a1a2a;letter-spacing:0.1px;">Event Pricing</div>
<div class="t" style="left:360px;top:240px;font-size:12px;color:#1a1a2a;letter-spacing:0.45px;">Customer</div>
<div class="a" style="left:419px;top:234px;width:159px;height:24px;border:1px solid #8E8E8E;background:#F6F6F6;box-shadow:0 0 0 1px #fff,inset 0 0 0 1px #fff"></div>
<div class="t" style="left:420px;top:240px;font-size:12px;color:#1a1a2a;letter-spacing:-0.07px;">EVERGREEN AV RENTALS</div>
<svg class="a" style="left:559px;top:236px" width="17" height="17" viewBox="0 0 17 17">
<path d="M9.5 9.5 L15 15" stroke="#4a4a5a" stroke-width="3.6" stroke-linecap="round"/>
<path d="M10 10 L14.5 14.5" stroke="#F08A2A" stroke-width="1.8" stroke-linecap="round"/>
<circle cx="6.5" cy="6.5" r="5" fill="#BFE6F3" stroke="#5a6070" stroke-width="1.3"/>
<circle cx="5.5" cy="7" r="2" fill="#fff" opacity="0.9"/>
</svg>
<div class="t" style="left:360px;top:268px;font-size:12px;color:#1a1a2a;letter-spacing:0.27px;">Contact</div>
<div class="a" style="left:419px;top:263px;width:159px;height:24px;border:1px solid #8E8E8E;background:#F6F6F6;box-shadow:0 0 0 1px #fff,inset 0 0 0 1px #fff"></div>
<div class="t" style="left:420px;top:269px;font-size:12px;color:#1a1a2a;letter-spacing:-0.17px;">JEFFERSON SAM</div>
<svg class="a" style="left:559px;top:265px" width="17" height="17" viewBox="0 0 17 17">
<path d="M9.5 9.5 L15 15" stroke="#4a4a5a" stroke-width="3.6" stroke-linecap="round"/>
<path d="M10 10 L14.5 14.5" stroke="#F08A2A" stroke-width="1.8" stroke-linecap="round"/>
<circle cx="6.5" cy="6.5" r="5" fill="#BFE6F3" stroke="#5a6070" stroke-width="1.3"/>
<circle cx="5.5" cy="7" r="2" fill="#fff" opacity="0.9"/>
</svg>
<div class="t" style="left:360px;top:297px;font-size:12px;color:#1a1a2a;letter-spacing:0.35px;">Contact Tel #</div>
<div class="a" style="left:449px;top:292px;width:129px;height:24px;border:1px solid #8E8E8E;background:#F6F6F6;box-shadow:0 0 0 1px #fff,inset 0 0 0 1px #fff"></div>
<div class="t" style="left:450px;top:298px;font-size:12px;color:#1a1a2a;letter-spacing:0.2px;">100-121433</div>
<svg style="left:752px;top:124px" width="91" height="22"><path d="M0.5 22 L0.5 6.5 L6.5 0.5 L89.5 0.5 L89.5 22" fill="#fff" stroke="#6F8DC5" stroke-width="1"/><path d="M2 22 L2 7 L7 2 L89 2 L89 22 Z" fill="#C4411F"/></svg>
<div class="t" style="left:757px;top:128px;font-size:12px;color:#fff;letter-spacing:0px;font-weight:bold;">Comments</div>
<svg style="left:842px;top:124px" width="121" height="22"><path d="M0.5 22 L0.5 6.5 L6.5 0.5 L119.5 0.5 L119.5 22" fill="#fff" stroke="#6F8DC5" stroke-width="1"/><path d="M2 22 L2 7 L7 2 L119 2 L119 22 Z" fill="#F89C47"/></svg>
<div class="t" style="left:847px;top:128px;font-size:12px;color:#111;letter-spacing:0.3px;">LaborComments</div>
<div class="a" style="left:750px;top:146px;width:290px;height:83px;border:1px solid #6F8DC5;border-top:none;background:#CFDFEF"></div>
<div class="a" style="left:750px;top:146px;width:2px;height:1px;background:#6F8DC5"></div>
<div class="a" style="left:842px;top:146px;width:198px;height:1px;background:#6F8DC5"></div>
<div class="a" style="left:752px;top:149px;width:285px;height:77px;border:1px solid #B0B0B0;background:#F6F6F6"></div>
<div class="a" style="left:759px;top:152px;width:269px;height:69px;border:2px solid #7A7F88;border-right-width:2px;background:#F6F6F6"></div>
<svg class="a" style="left:1009px;top:155px" width="17" height="17" viewBox="0 0 17 17">
<path d="M9.5 9.5 L15 15" stroke="#4a4a5a" stroke-width="3.6" stroke-linecap="round"/>
<path d="M10 10 L14.5 14.5" stroke="#F08A2A" stroke-width="1.8" stroke-linecap="round"/>
<circle cx="6.5" cy="6.5" r="5" fill="#BFE6F3" stroke="#5a6070" stroke-width="1.3"/>
<circle cx="5.5" cy="7" r="2" fill="#fff" opacity="0.9"/>
</svg>
<div class="t" style="left:750px;top:246px;font-size:12px;color:#1a1a2a;letter-spacing:0.23px;">Document Folder:</div>
<div class="a" style="left:936px;top:238px;width:29px;height:22px;border:1px solid #A8A8A8;background:#F6F6F6;box-shadow:inset 1px 1px 0 #fff"></div>
<div class="t" style="left:937px;top:244px;font-size:10px;color:#111;letter-spacing:0px;font-weight:bold;">Reset</div>
<div class="a" style="left:750px;top:262px;width:216px;height:49px;border:2px solid #7A7F88;background:#F6F6F6"></div>
<svg style="left:11px;top:330px" width="67" height="22"><path d="M0.5 22 L0.5 6.5 L6.5 0.5 L65.5 0.5 L65.5 22" fill="#fff" stroke="#6F8DC5" stroke-width="1"/><path d="M2 22 L2 7 L7 2 L65 2 L65 22 Z" fill="#C4411F"/></svg>
<div class="t" style="left:16px;top:335px;font-size:12px;color:#fff;letter-spacing:0px;font-weight:bold;">Item(s)</div>
<svg style="left:77px;top:330px" width="74" height="22"><path d="M0.5 22 L0.5 6.5 L6.5 0.5 L72.5 0.5 L72.5 22" fill="#fff" stroke="#6F8DC5" stroke-width="1"/><path d="M2 22 L2 7 L7 2 L72 2 L72 22 Z" fill="#F89C47"/></svg>
<div class="t" style="left:82px;top:335px;font-size:12px;color:#111;letter-spacing:0.3px;">Labor(s)</div>
<div class="a" style="left:8px;top:352px;width:1048px;height:319px;border:1px solid #6F8DC5;border-top:none;background:#CFDFEF"></div>
<div class="a" style="left:8px;top:352px;width:3px;height:1px;background:#6F8DC5"></div>
<div class="a" style="left:77px;top:352px;width:979px;height:1px;background:#6F8DC5"></div>
<div class="a" style="left:10px;top:356px;width:1042px;height:311px;border:1px solid #A8A8A8;background:#F6F6F6;box-shadow:inset 1px 1px 0 #fff"></div>
<div class="a" style="left:12px;top:358px;width:1038px;height:307px;border:1px solid #6E7890;background:#F6F6F6"></div>
<div class="a" style="left:12px;top:358px;width:1037px;height:289px;overflow:hidden">
<div class="a" style="left:0px;top:0px;width:1037px;height:1px;background:#7D8596"></div>
<div class="a" style="left:0px;top:1px;width:1061px;height:20px;background:#F07A30"></div>
<div class="a" style="left:1px;top:1px;width:14px;height:19px;border:1px solid #A42A1E;background:#C4411F;box-shadow:inset 1px 1px 0 #F07A30"></div>
<div class="t" style="left:1px;top:5px;color:#fff;letter-spacing:0.1px;width:14px;text-align:center;overflow:hidden;">T</div>
<div class="a" style="left:16px;top:1px;width:14px;height:19px;border:1px solid #A42A1E;background:#C4411F;box-shadow:inset 1px 1px 0 #F07A30"></div>
<div class="t" style="left:16px;top:5px;color:#fff;letter-spacing:0.1px;width:14px;text-align:center;overflow:hidden;">C</div>
<div class="a" style="left:31px;top:1px;width:14px;height:19px;border:1px solid #A42A1E;background:#C4411F;box-shadow:inset 1px 1px 0 #F07A30"></div>
<div class="t" style="left:31px;top:5px;color:#fff;letter-spacing:0.1px;width:14px;text-align:center;overflow:hidden;">X</div>
<div class="a" style="left:46px;top:1px;width:74px;height:19px;border:1px solid #A42A1E;background:#C4411F;box-shadow:inset 1px 1px 0 #F07A30"></div>
<div class="t" style="left:46px;top:5px;color:#fff;letter-spacing:0.1px;width:74px;text-align:center;overflow:hidden;">Status</div>
<div class="a" style="left:121px;top:1px;width:19px;height:19px;border:1px solid #A42A1E;background:#C4411F;box-shadow:inset 1px 1px 0 #F07A30"></div>
<div class="t" style="left:121px;top:5px;color:#fff;letter-spacing:0.1px;width:19px;text-align:center;overflow:hidden;">L</div>
<div class="a" style="left:141px;top:1px;width:44px;height:19px;border:1px solid #A42A1E;background:#C4411F;box-shadow:inset 1px 1px 0 #F07A30"></div>
<div class="t" style="left:141px;top:5px;color:#fff;letter-spacing:0.1px;width:44px;text-align:center;overflow:hidden;">Action</div>
<div class="a" style="left:186px;top:1px;width:99px;height:19px;border:1px solid #A42A1E;background:#C4411F;box-shadow:inset 1px 1px 0 #F07A30"></div>
<div class="t" style="left:186px;top:5px;color:#fff;letter-spacing:0.1px;width:99px;text-align:center;overflow:hidden;">Product ID</div>
<div class="a" style="left:286px;top:1px;width:259px;height:19px;border:1px solid #A42A1E;background:#C4411F;box-shadow:inset 1px 1px 0 #F07A30"></div>
<div class="t" style="left:286px;top:5px;color:#fff;letter-spacing:0.1px;width:259px;text-align:center;overflow:hidden;">Description</div>
<div class="a" style="left:546px;top:1px;width:54px;height:19px;border:1px solid #A42A1E;background:#C4411F;box-shadow:inset 1px 1px 0 #F07A30"></div>
<div class="t" style="left:546px;top:5px;color:#fff;letter-spacing:0.1px;width:54px;text-align:center;overflow:hidden;">Duration</div>
<div class="a" style="left:601px;top:1px;width:29px;height:19px;border:1px solid #A42A1E;background:#C4411F;box-shadow:inset 1px 1px 0 #F07A30"></div>
<div class="t" style="left:601px;top:5px;color:#fff;letter-spacing:0.1px;width:29px;text-align:center;overflow:hidden;">DIW</div>
<div class="a" style="left:631px;top:1px;width:49px;height:19px;border:1px solid #A42A1E;background:#C4411F;box-shadow:inset 1px 1px 0 #F07A30"></div>
<div class="t" style="left:631px;top:5px;color:#fff;letter-spacing:0.1px;width:49px;text-align:center;overflow:hidden;">DIM</div>
<div class="a" style="left:681px;top:1px;width:29px;height:19px;border:1px solid #A42A1E;background:#C4411F;box-shadow:inset 1px 1px 0 #F07A30"></div>
<div class="t" style="left:681px;top:5px;color:#fff;letter-spacing:0.1px;width:29px;text-align:center;overflow:hidden;">Qty</div>
<div class="a" style="left:711px;top:1px;width:39px;height:19px;border:1px solid #A42A1E;background:#C4411F;box-shadow:inset 1px 1px 0 #F07A30"></div>
<div class="t" style="left:711px;top:5px;color:#fff;letter-spacing:0.1px;width:39px;text-align:center;overflow:hidden;">Unit</div>
<div class="a" style="left:751px;top:1px;width:59px;height:19px;border:1px solid #A42A1E;background:#C4411F;box-shadow:inset 1px 1px 0 #F07A30"></div>
<div class="t" style="left:751px;top:5px;color:#fff;letter-spacing:0.1px;width:59px;text-align:center;overflow:hidden;">Unit Price</div>
<div class="a" style="left:811px;top:1px;width:54px;height:19px;border:1px solid #A42A1E;background:#C4411F;box-shadow:inset 1px 1px 0 #F07A30"></div>
<div class="t" style="left:811px;top:5px;color:#fff;letter-spacing:0.1px;width:54px;text-align:center;overflow:hidden;">Discount</div>
<div class="a" style="left:866px;top:1px;width:59px;height:19px;border:1px solid #A42A1E;background:#C4411F;box-shadow:inset 1px 1px 0 #F07A30"></div>
<div class="t" style="left:866px;top:5px;color:#fff;letter-spacing:0.1px;width:59px;text-align:center;overflow:hidden;">Net Each</div>
<div class="a" style="left:926px;top:1px;width:59px;height:19px;border:1px solid #A42A1E;background:#C4411F;box-shadow:inset 1px 1px 0 #F07A30"></div>
<div class="t" style="left:926px;top:5px;color:#fff;letter-spacing:0.1px;width:59px;text-align:center;overflow:hidden;">Net Disc</div>
<div class="a" style="left:986px;top:1px;width:77px;height:19px;border:1px solid #A42A1E;background:#C4411F;box-shadow:inset 1px 1px 0 #F07A30"></div>
<div class="t" style="left:986px;top:5px;color:#fff;letter-spacing:0.1px;width:77px;text-align:center;overflow:hidden;">Amount</div>
<div class="a" style="left:0px;top:20px;width:1061px;height:1px;background:#F07A35"></div>
<div class="a" style="left:0px;top:21px;width:1061px;height:19px;background:#F89C47;border-bottom:1px solid #C06A40"></div>
<div class="a" style="left:0px;top:40px;width:1061px;height:19px;background:#F6F6F6;border-bottom:1px solid #C06A40"></div>
<div class="a" style="left:15px;top:21px;width:1px;height:38px;background:#C06A40"></div>
<div class="a" style="left:30px;top:21px;width:1px;height:38px;background:#C06A40"></div>
<div class="a" style="left:45px;top:21px;width:1px;height:38px;background:#C06A40"></div>
<div class="a" style="left:120px;top:21px;width:1px;height:38px;background:#C06A40"></div>
<div class="a" style="left:140px;top:21px;width:1px;height:38px;background:#C06A40"></div>
<div class="a" style="left:185px;top:21px;width:1px;height:38px;background:#C06A40"></div>
<div class="a" style="left:285px;top:21px;width:1px;height:38px;background:#C06A40"></div>
<div class="a" style="left:545px;top:21px;width:1px;height:38px;background:#C06A40"></div>
<div class="a" style="left:600px;top:21px;width:1px;height:38px;background:#C06A40"></div>
<div class="a" style="left:630px;top:21px;width:1px;height:38px;background:#C06A40"></div>
<div class="a" style="left:680px;top:21px;width:1px;height:38px;background:#C06A40"></div>
<div class="a" style="left:710px;top:21px;width:1px;height:38px;background:#C06A40"></div>
<div class="a" style="left:750px;top:21px;width:1px;height:38px;background:#C06A40"></div>
<div class="a" style="left:810px;top:21px;width:1px;height:38px;background:#C06A40"></div>
<div class="a" style="left:865px;top:21px;width:1px;height:38px;background:#C06A40"></div>
<div class="a" style="left:925px;top:21px;width:1px;height:38px;background:#C06A40"></div>
<div class="a" style="left:985px;top:21px;width:1px;height:38px;background:#C06A40"></div>
<svg style="left:1px;top:23px" width="15" height="15"><rect x="2" y="2" width="10" height="10" fill="url(#og)"/><path d="M1 12.5 H14 M13.5 13 V1" stroke="#fff" stroke-width="1"/><path d="M1 1.5 H13 M1.5 1 V12 M12.5 3 V13 M3 12.5 H13" stroke="#6E7890" stroke-width="1"/><path d="M2 2.5 H12 M2.5 2 V12" stroke="#fff" stroke-width="1"/><path d="M4.5 6 V10.5 L10.2 4.2" stroke="#111" stroke-width="2" fill="none" stroke-linejoin="miter"/></svg>
<svg style="left:16px;top:23px" width="15" height="15"><rect x="2" y="2" width="10" height="10" fill="url(#og)"/><path d="M1 12.5 H14 M13.5 13 V1" stroke="#fff" stroke-width="1"/><path d="M1 1.5 H13 M1.5 1 V12 M12.5 3 V13 M3 12.5 H13" stroke="#6E7890" stroke-width="1"/><path d="M2 2.5 H12 M2.5 2 V12" stroke="#fff" stroke-width="1"/></svg>
<svg style="left:31px;top:23px" width="15" height="15"><rect x="2" y="2" width="10" height="10" fill="url(#og)"/><path d="M1 12.5 H14 M13.5 13 V1" stroke="#fff" stroke-width="1"/><path d="M1 1.5 H13 M1.5 1 V12 M12.5 3 V13 M3 12.5 H13" stroke="#6E7890" stroke-width="1"/><path d="M2 2.5 H12 M2.5 2 V12" stroke="#fff" stroke-width="1"/></svg>
<svg style="left:123px;top:23px" width="15" height="15"><rect x="2" y="2" width="10" height="10" fill="url(#og)"/><path d="M1 12.5 H14 M13.5 13 V1" stroke="#fff" stroke-width="1"/><path d="M1 1.5 H13 M1.5 1 V12 M12.5 3 V13 M3 12.5 H13" stroke="#6E7890" stroke-width="1"/><path d="M2 2.5 H12 M2.5 2 V12" stroke="#fff" stroke-width="1"/></svg>
<div class="t" style="left:47px;top:24px;color:#FF0000;letter-spacing:0px;">Not Available</div>
<div class="t" style="left:142px;top:24px;color:#FF0000;letter-spacing:0px;">Rent</div>
<div class="t" style="left:187px;top:24px;color:#FF0000;letter-spacing:-0.25px;">AMPLIFIER MEY...</div>
<div class="t" style="left:293px;top:24px;color:#FF0000;letter-spacing:0px;">Amplifier Meyer</div>
<div class="t" style="left:548px;top:24px;color:#FF0000;letter-spacing:0px;">1d</div>
<div class="t" style="left:680px;top:24px;color:#FF0000;letter-spacing:0px;width:29px;text-align:right;overflow:hidden;">1</div>
<div class="t" style="left:712px;top:24px;color:#FF0000;letter-spacing:0px;">Day</div>
<div class="t" style="left:750px;top:24px;color:#FF0000;letter-spacing:0.3px;width:59px;text-align:right;overflow:hidden;">0.00</div>
<div class="t" style="left:810px;top:24px;color:#FF0000;letter-spacing:0.3px;width:54px;text-align:right;overflow:hidden;">0.00</div>
<div class="t" style="left:865px;top:24px;color:#FF0000;letter-spacing:0.3px;width:59px;text-align:right;overflow:hidden;">0.00</div>
<div class="t" style="left:925px;top:24px;color:#FF0000;letter-spacing:0.3px;width:59px;text-align:right;overflow:hidden;">0.00</div>
<div class="t" style="left:985px;top:24px;color:#FF0000;letter-spacing:0.3px;width:75px;text-align:right;overflow:hidden;">0.00</div>
<svg style="left:1px;top:42px" width="15" height="15"><path d="M5 12 L12 5 V12 Z" fill="#F7B888"/><path d="M1 12.5 H14 M13.5 13 V1" stroke="#fff" stroke-width="1"/><path d="M1 1.5 H13 M1.5 1 V12 M12.5 3 V13 M3 12.5 H13" stroke="#6E7890" stroke-width="1"/><path d="M2 2.5 H12 M2.5 2 V12" stroke="#fff" stroke-width="1"/><path d="M4.5 6 V10.5 L10.2 4.2" stroke="#111" stroke-width="2" fill="none" stroke-linejoin="miter"/></svg>
<svg style="left:16px;top:42px" width="15" height="15"><path d="M5 12 L12 5 V12 Z" fill="#F7B888"/><path d="M1 12.5 H14 M13.5 13 V1" stroke="#fff" stroke-width="1"/><path d="M1 1.5 H13 M1.5 1 V12 M12.5 3 V13 M3 12.5 H13" stroke="#6E7890" stroke-width="1"/><path d="M2 2.5 H12 M2.5 2 V12" stroke="#fff" stroke-width="1"/></svg>
<svg style="left:31px;top:42px" width="15" height="15"><path d="M5 12 L12 5 V12 Z" fill="#F7B888"/><path d="M1 12.5 H14 M13.5 13 V1" stroke="#fff" stroke-width="1"/><path d="M1 1.5 H13 M1.5 1 V12 M12.5 3 V13 M3 12.5 H13" stroke="#6E7890" stroke-width="1"/><path d="M2 2.5 H12 M2.5 2 V12" stroke="#fff" stroke-width="1"/></svg>
<svg style="left:123px;top:42px" width="15" height="15"><path d="M5 12 L12 5 V12 Z" fill="#F7B888"/><path d="M1 12.5 H14 M13.5 13 V1" stroke="#fff" stroke-width="1"/><path d="M1 1.5 H13 M1.5 1 V12 M12.5 3 V13 M3 12.5 H13" stroke="#6E7890" stroke-width="1"/><path d="M2 2.5 H12 M2.5 2 V12" stroke="#fff" stroke-width="1"/></svg>
<div class="t" style="left:47px;top:43px;color:#111;letter-spacing:0px;">Reserved</div>
<div class="t" style="left:142px;top:43px;color:#111;letter-spacing:0px;">Rent</div>
<div class="t" style="left:187px;top:43px;color:#111;letter-spacing:0.1px;">SHURE SCM268</div>
<div class="t" style="left:293px;top:43px;color:#111;letter-spacing:0px;">Shure SCM268</div>
<div class="t" style="left:548px;top:43px;color:#111;letter-spacing:0px;">1d</div>
<div class="t" style="left:680px;top:43px;color:#111;letter-spacing:0px;width:29px;text-align:right;overflow:hidden;">1</div>
<div class="t" style="left:712px;top:43px;color:#111;letter-spacing:0px;">Day</div>
<div class="t" style="left:750px;top:43px;color:#111;letter-spacing:0.3px;width:59px;text-align:right;overflow:hidden;">0.00</div>
<div class="t" style="left:810px;top:43px;color:#111;letter-spacing:0.3px;width:54px;text-align:right;overflow:hidden;">0.00</div>
<div class="t" style="left:865px;top:43px;color:#111;letter-spacing:0.3px;width:59px;text-align:right;overflow:hidden;">0.00</div>
<div class="t" style="left:925px;top:43px;color:#111;letter-spacing:0.3px;width:59px;text-align:right;overflow:hidden;">0.00</div>
<div class="t" style="left:985px;top:43px;color:#111;letter-spacing:0.3px;width:75px;text-align:right;overflow:hidden;">0.00</div>
</div>
<div class="a" style="left:13px;top:647px;width:1036px;height:17px;border-top:1px solid #6E7890;background:#F6F6F6"></div>
<div class="a" style="left:28px;top:648px;width:1004px;height:1px;background:#B8CCF0"></div>
<div class="a" style="left:28px;top:663px;width:1004px;height:1px;background:#B8CCF0"></div>
<div class="a" style="left:15px;top:662px;width:13px;height:1px;background:#6E7890"></div>
<svg style="left:19px;top:652px" width="5" height="8"><path d="M4.5 0 L0 4 L4.5 8 Z" fill="#1a2020"/></svg>
<div class="a" style="left:28px;top:647px;width:525px;height:17px;border:1px solid #FFC400;background:linear-gradient(#DDB48C 0,#DDB48C 6px,#E8C080 6px,#E8C080 7px,#EDA870 7px,#EDA870 12px,#E09A60 12px);box-shadow:inset 1px 1px 0 #F07050"></div>
<div class="a" style="left:288px;top:651px;width:1px;height:8px;background:#fff"></div>
<div class="a" style="left:290px;top:651px;width:1px;height:8px;background:#fff"></div>
<div class="a" style="left:292px;top:651px;width:1px;height:8px;background:#fff"></div>
<div class="a" style="left:1032px;top:647px;width:16px;height:16px;border-left:1px solid #6E7890;border-right:1px solid #6E7890;border-bottom:1px solid #6E7890;border-top:1px solid #6E7890;background:#F6F6F6"></div>
<svg style="left:1039px;top:652px" width="5" height="8"><path d="M0 0 L4.5 4 L0 8 Z" fill="#1a2020"/></svg>
<div class="a" style="left:15px;top:673px;width:519px;height:24px;border:1px solid #C8C8C8;background:#F6F6F6;box-shadow:inset 1px 1px 0 #fff"></div>
<div class="t" style="left:24px;top:680px;font-size:12px;color:#111;letter-spacing:0.15px;">C - Comments</div>
<div class="t" style="left:119px;top:680px;font-size:12px;color:#222;letter-spacing:-0.05px;">X - No Exchange</div>
<div class="t" style="left:228px;top:680px;font-size:12px;color:#111;letter-spacing:0.15px;">* - Non Discountable</div>
<div class="t" style="left:357px;top:680px;font-size:12px;color:#111;letter-spacing:0.15px;">L - Lock The Line</div>
<div class="t" style="left:466px;top:680px;font-size:12px;color:#111;letter-spacing:0.15px;">T - Taxable</div>
<div class="t" style="left:620px;top:679px;font-size:14px;color:#1a1a2a;letter-spacing:0.2px;font-weight:bold;">Labor</div>
<div class="a" style="left:675px;top:673px;width:100px;height:24px;border:1px solid #8E8E8E;background:#F6F6F6"></div>
<div class="a" style="left:805px;top:673px;width:89px;height:23px;border:1px solid #C2C2C2;background:#F6F6F6"></div>
<div class="t" style="left:834px;top:679px;font-size:14px;color:#111;letter-spacing:0.2px;font-weight:bold;">Total</div>
<div class="a" style="left:905px;top:673px;width:100px;height:24px;border:1px solid #8E8E8E;background:#F6F6F6"></div>
<div class="t" style="left:906px;top:678px;font-size:14px;color:#111;letter-spacing:0.2px;font-weight:bold;">0.00</div>
<div class="a" style="left:9px;top:708px;width:1046px;height:19px;border-top:1px solid #767676;border-left:1px solid #767676;border-right:1px solid #C8C8C8;background:#F6F6F6;box-shadow:inset 1px 1px 0 #fff"></div>
</body></html>
